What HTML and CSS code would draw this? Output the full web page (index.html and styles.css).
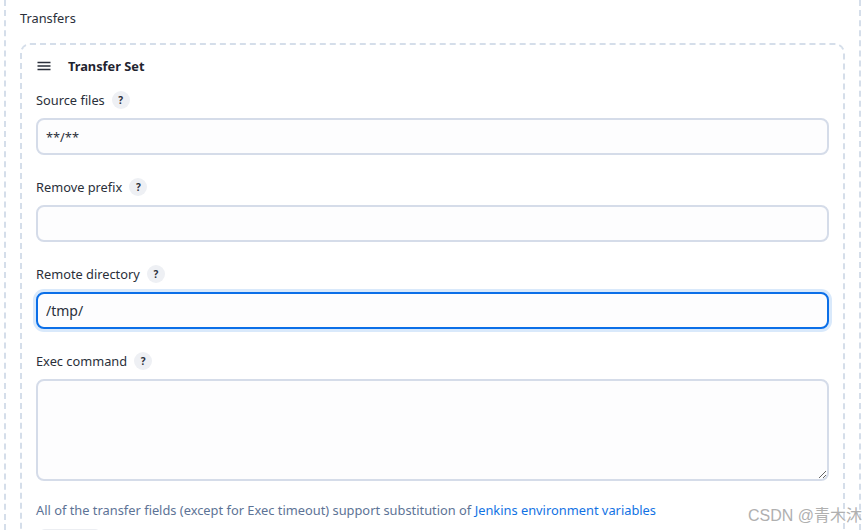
FILE: index.html
```html
<!DOCTYPE html>
<html lang="en">
<head>
  <meta charset="UTF-8">
  <title>Transfers</title>
  <link rel="stylesheet" href="styles.css">
</head>
<body>
  <div class="outer">
    <div class="section-title">Transfers</div>
    <div class="repeated">
      <div class="repeated-head">
        <svg class="handle" width="16" height="16" viewBox="0 0 16 16"><path d="M1.5 4.5h13M1.5 8h13M1.5 11.5h13" stroke="#2a2f3a" stroke-width="1.3" fill="none"/></svg>
        <b>Transfer Set</b>
      </div>
      <div class="field">
        <div class="label">Source files <span class="help">?</span></div>
        <input class="box" type="text" value="**/**">
      </div>
      <div class="field">
        <div class="label">Remove prefix <span class="help">?</span></div>
        <input class="box" type="text">
      </div>
      <div class="field">
        <div class="label">Remote directory <span class="help">?</span></div>
        <input class="box focused" type="text" value="/tmp/">
      </div>
      <div class="field">
        <div class="label">Exec command <span class="help">?</span></div>
        <textarea class="box area"></textarea>
      </div>
      <p class="note">All of the transfer fields (except for Exec timeout) support substitution of <a href="#">Jenkins environment variables</a></p>
      <div class="advanced"></div>
    </div>
  </div>
  <div class="watermark">CSDN @青木沐</div>
</body>
</html>
```

FILE: styles.css
```css
html, body {
  height: 530px;
  overflow: hidden;
}
body {
  margin: 0;
  background-color: #fff;
  color: #2a2f3a;
  font-family: "Noto Sans", "Noto Sans CJK SC", sans-serif;
  font-size: 12.8px;
  line-height: 18px;
}
.outer {
  box-sizing: border-box;
  height: 530px;
  margin: 0 4px;
  padding: 9px 14px 0;
  border: dashed #d5deea;
  border-width: 0 2px;
  overflow: hidden;
}
.section-title {
  margin-bottom: 16px;
}
.repeated {
  border: 2px dashed #d5deea;
  border-radius: 10px;
  padding: 12px 14px 0;
  height: 640px;
}
.repeated-head {
  display: flex;
  align-items: center;
  gap: 16px;
  height: 18px;
  margin-bottom: 16px;
}
.repeated-head b {
  font-weight: 700;
  color: #1f2430;
}
.handle {
  flex: none;
}
.field {
  margin-bottom: 23px;
}
.label {
  display: flex;
  align-items: center;
  gap: 7px;
  height: 18px;
  margin-bottom: 9px;
}
.help {
  display: inline-flex;
  align-items: center;
  justify-content: center;
  width: 18px;
  height: 18px;
  border-radius: 50%;
  background-color: #eef0f4;
  font-size: 10px;
  font-weight: 700;
}
.box {
  display: block;
  box-sizing: border-box;
  width: 793px;
  height: 37px;
  margin: 0;
  padding: 0 8px;
  border: 2px solid #d5dce9;
  border-radius: 8px;
  background-color: #fdfdfe;
  color: #2a2f3a;
  font: inherit;
  outline: none;
}
.area {
  height: 102px;
  resize: vertical;
}
.focused {
  border-color: #0b6fe8;
  box-shadow: 0 0 0 3px #d9e9fb;
  font-size: 14px;
}
.note {
  margin: -3px 0 0;
  color: #5d7396;
  font-size: 12.85px;
}
.note a {
  color: #1172e4;
  text-decoration: none;
}
.advanced {
  width: 60px;
  height: 30px;
  margin: 10px 0 0 3px;
  border: 1px solid #eceef2;
  border-radius: 6px;
}
.watermark {
  position: absolute;
  left: 748px;
  top: 506px;
  color: #b0b0b0;
  font-family: "Liberation Sans", "Noto Sans CJK SC", sans-serif;
  font-size: 16px;
  line-height: 20px;
  white-space: nowrap;
}
```
